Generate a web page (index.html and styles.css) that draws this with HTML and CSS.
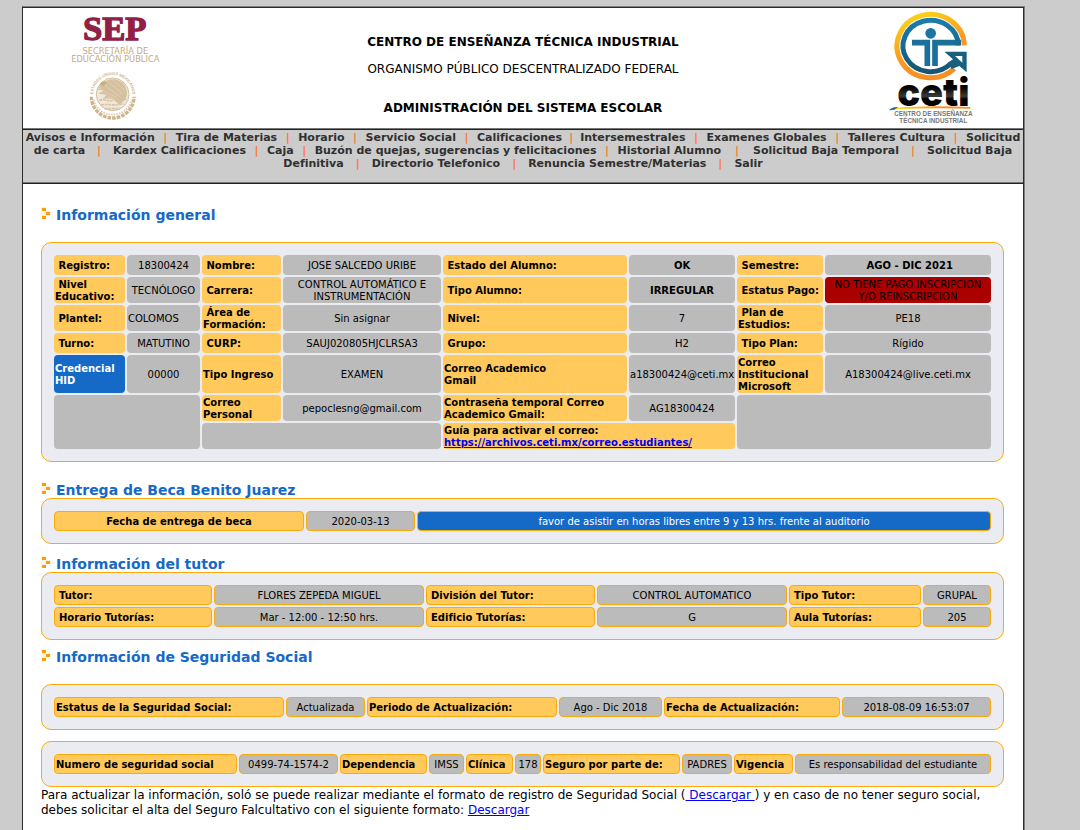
FILE: index.html
```html
<!DOCTYPE html>
<html lang="es">
<head>
<meta charset="utf-8">
<title>Administración del Sistema Escolar</title>
<link rel="stylesheet" href="styles.css">
</head>
<body>
<div class="frame">
<header class="banner">
  <svg class="sep-logo" viewBox="207 24 276 360" role="img" aria-label="SEP Secretaría de Educación Pública">
    <text class="sep-name" x="344" y="119">SEP</text>
    <text class="sep-sub" x="346" y="161">SECRETARÍA DE</text>
    <text class="sep-sub" x="346" y="187">EDUCACIÓN PÚBLICA</text>
    <path id="seal-arc" d="M279 284a59 59 0 0 1 118 0" fill="none"/>
    <text class="seal-text"><textPath href="#seal-arc" startOffset="50%">ESTADOS UNIDOS MEXICANOS</textPath></text>
    <path d="M274 290a64 64 0 0 0 128 0" fill="none" stroke="#cdb58d" stroke-width="10" stroke-dasharray="11 3"/>
    <path d="M281 300a59 59 0 0 0 114 0" fill="none" stroke="#dccbae" stroke-width="5" stroke-dasharray="5 3"/>
    <circle cx="338" cy="283" r="49" fill="#f0e8dc" stroke="#d3bf9c" stroke-width="3"/>
    <path d="M294 266c12-22 34-32 56-27 22 6 32 25 31 45-4 16-14 25-25 29l-17-16-30-2 11-11-25-3 18-10-21-2 17-8z" fill="#d5c19f"/>
    <path d="M311 253l52 40M322 244l48 39M337 240l38 31M301 269l50 24M304 280l38 17" stroke="#e4d5bb" stroke-width="2"/>
    <path d="M319 246c-9-4-18 1-19 9l10 2c5-1 8-5 9-11z" fill="#c7ae82"/>
    <path d="M298 302c14-9 25 5 39-1 14-8 28 4 42-4M303 315c18-5 30 4 68-4M313 326h47" fill="none" stroke="#d6c4a4" stroke-width="5" stroke-dasharray="9 2"/>
  </svg>
  <div class="titles">
    <p class="institution">CENTRO DE ENSEÑANZA TÉCNICA INDUSTRIAL</p>
    <p class="agency">ORGANISMO PÚBLICO DESCENTRALIZADO FEDERAL</p>
    <p class="system">ADMINISTRACIÓN DEL SISTEMA ESCOLAR</p>
  </div>
  <svg class="ceti-logo" viewBox="567 24 252 360" role="img" aria-label="CETI Centro de Enseñanza Técnica Industrial">
    <defs>
      <linearGradient id="gold" x1="0" y1="0" x2="0.4" y2="1">
        <stop offset="0" stop-color="#fadc18"/><stop offset="0.6" stop-color="#fa9c22"/><stop offset="1" stop-color="#f88e22"/>
      </linearGradient>
      <linearGradient id="blue" x1="0" y1="0" x2="0" y2="1">
        <stop offset="0" stop-color="#1b7cac"/><stop offset="1" stop-color="#155773"/>
      </linearGradient>
      <linearGradient id="gloss" x1="0" y1="0" x2="0" y2="1">
        <stop offset="0.4" stop-color="#000"/><stop offset="0.6" stop-color="#3a3a3a"/><stop offset="0.66" stop-color="#000"/>
      </linearGradient>
      <linearGradient id="stripe"><stop offset="0" stop-color="#fade20"/><stop offset="0.6" stop-color="#f88e22"/></linearGradient>
    </defs>
    <path d="M793 136A101 95 0 1 0 763 206" fill="none" stroke="url(#gold)" stroke-width="15"/>
    <path d="M636 128H682V198M783 128H705V198" fill="none" stroke="#1a7098" stroke-width="17"/>
    <path d="M775 136A83 77 0 1 0 751 192" fill="none" stroke="url(#blue)" stroke-width="15"/>
    <circle cx="692" cy="100" r="16" fill="#1a75a2"/>
    <path d="M733 155H800V217L778 198 755 207 743 188 759 178Z" fill="#17617f"/>
    <path d="M765 168H787V188Z" fill="#fff"/>
    <text class="ceti-name" x="700" y="317">ceti</text>
    <path d="M588 323Q680 315 811 321V326Q690 323 588 328Z" fill="url(#stripe)"/>
    <path d="M566 331Q577 320 594 321L584 329Z" fill="#1a7098"/>
    <text class="ceti-sub" x="700" y="347">CENTRO DE ENSEÑANZA</text>
    <text class="ceti-sub" x="700" y="368">TÉCNICA INDUSTRIAL</text>
  </svg>
</header>

<nav class="menu">
<a href="#">Avisos e Información</a><span class="bar">|</span><a href="#">Tira de Materias</a><span class="bar">|</span><a href="#">Horario</a><span class="bar">|</span><a href="#">Servicio Social</a><span class="bar">|</span><a href="#">Calificaciones</a><span class="bar tight">|</span><a href="#">Intersemestrales</a><span class="bar">|</span><a href="#">Examenes Globales</a><span class="bar">|</span><a href="#">Talleres Cultura</a><span class="bar">|</span><a href="#">Solicitud<br>de carta</a><span class="bar wide">|</span><a href="#">Kardex Calificaciones</a><span class="bar">|</span><a href="#">Caja</a><span class="bar">|</span><a href="#">Buzón de quejas, sugerencias y felicitaciones</a><span class="bar">|</span><a href="#">Historial Alumno</a><span class="bar wider">|</span><a href="#">Solicitud Baja Temporal</a><span class="bar wide">|</span><a href="#">Solicitud Baja<br>Definitiva</a><span class="bar wide">|</span><a href="#">Directorio Telefonico</a><span class="bar wide">|</span><a href="#">Renuncia Semestre/Materias</a><span class="bar wide">|</span><a href="#">Salir</a>
</nav>

<main class="content">
<svg class="defs" aria-hidden="true"><symbol id="marker" viewBox="0 0 10 12"><path d="M0 0h5v4h5v4H5v4H0z" fill="#fff3dc"/><path d="M1 1h4v3H1zM5 5h4v3H5zM1 9h4v3H1z" fill="#ff9b05"/></symbol></svg>

<section class="block general">
  <h2><svg class="marker"><use href="#marker"/></svg>Información general</h2>
  <div class="panel">
  <table class="t-general">
    <colgroup><col><col><col><col><col><col><col><col></colgroup>
    <tr><th>&nbsp;Registro:</th><td>18300424</td><th>&nbsp;Nombre:</th><td>JOSE SALCEDO URIBE</td><th>&nbsp;Estado del Alumno:</th><td class="strong">OK</td><th>&nbsp;Semestre:</th><td class="strong">&nbsp;AGO - DIC 2021</td></tr>
    <tr><th>&nbsp;Nivel<br>Educativo:</th><td>TECNÓLOGO</td><th>&nbsp;Carrera:</th><td>CONTROL AUTOMÁTICO E INSTRUMENTACIÓN</td><th>&nbsp;Tipo Alumno:</th><td class="strong">IRREGULAR</td><th>&nbsp;Estatus Pago:</th><td class="unpaid">NO TIENE PAGO INSCRIPCION Y/O REINSCRIPCION</td></tr>
    <tr><th>&nbsp;Plantel:</th><td class="start">COLOMOS</td><th>&nbsp;Área de<br>Formación:</th><td>Sin asignar</td><th>&nbsp;Nivel:</th><td>7</td><th>&nbsp;Plan de<br>Estudios:</th><td>PE18</td></tr>
    <tr><th>&nbsp;Turno:</th><td>MATUTINO</td><th>&nbsp;CURP:</th><td>SAUJ020805HJCLRSA3</td><th>&nbsp;Grupo:</th><td>H2</td><th>&nbsp;Tipo Plan:</th><td>Rígido</td></tr>
    <tr><th class="notice">Credencial HID</th><td>00000</td><th>Tipo Ingreso</th><td>EXAMEN</td><th>Correo Academico<br>Gmail</th><td>a18300424@ceti.mx</td><th>Correo Institucional Microsoft</th><td>A18300424@live.ceti.mx</td></tr>
    <tr><td colspan="2" rowspan="2"></td><th>Correo Personal</th><td>pepoclesng@gmail.com</td><th>Contraseña temporal Correo Academico Gmail:</th><td>AG18300424</td><td colspan="2" rowspan="2"></td></tr>
    <tr><td colspan="2"></td><th colspan="2">Guía para activar el correo:<br><a href="#">https://archivos.ceti.mx/correo.estudiantes/</a></th></tr>
  </table>
  </div>
</section>

<section class="block grant">
  <h2><svg class="marker"><use href="#marker"/></svg>Entrega de Beca Benito Juarez</h2>
  <div class="panel">
  <table class="t-grant outlined">
    <colgroup><col><col><col></colgroup>
    <tr><th>Fecha de entrega de beca</th><td>2020-03-13</td><td class="notice">favor de asistir en horas libres entre 9 y 13 hrs. frente al auditorio</td></tr>
  </table>
  </div>
</section>

<section class="block tutor">
  <h2><svg class="marker"><use href="#marker"/></svg>Información del tutor</h2>
  <div class="panel">
  <table class="t-tutor outlined">
    <colgroup><col><col><col><col><col><col></colgroup>
    <tr><th>Tutor:</th><td>FLORES ZEPEDA MIGUEL</td><th>División del Tutor:</th><td>CONTROL AUTOMATICO</td><th>Tipo Tutor:</th><td>GRUPAL</td></tr>
    <tr><th>Horario Tutorías:</th><td>Mar - 12:00 - 12:50 hrs.</td><th>Edificio Tutorías:</th><td>G</td><th>Aula Tutorías:</th><td>205</td></tr>
  </table>
  </div>
</section>

<section class="block social">
  <h2><svg class="marker"><use href="#marker"/></svg>Información de Seguridad Social</h2>
  <div class="panel">
  <table class="t-status outlined">
    <colgroup><col><col><col><col><col><col></colgroup>
    <tr><th>Estatus de la Seguridad Social:</th><td>Actualizada</td><th>Periodo de Actualización:</th><td>Ago - Dic 2018</td><th>Fecha de Actualización:</th><td>2018-08-09 16:53:07</td></tr>
  </table>
  </div>
  <div class="panel">
  <table class="t-number outlined">
    <colgroup><col><col><col><col><col><col><col><col><col><col></colgroup>
    <tr><th>Numero de seguridad social</th><td>0499-74-1574-2</td><th>Dependencia</th><td>IMSS</td><th>Clínica</th><td>178</td><th>Seguro por parte de:</th><td>PADRES</td><th>Vigencia</th><td>Es responsabilidad del estudiante</td></tr>
  </table>
  </div>
  <p class="help">Para actualizar la información, soló se puede realizar mediante el formato de registro de Seguridad Social (<a href="#">&nbsp;Descargar&nbsp;</a>) y en caso de no tener seguro social, debes solicitar el alta del Seguro Falcultativo con el siguiente formato: <a href="#">Descargar</a></p>
</section>
</main>
</div>
</body>
</html>
```
FILE: styles.css
```css
* { box-sizing: border-box; }
body {
  margin: 0;
  min-height: 100vh;
  display: flex;
  padding: 6px 55px 0 22px;
  background: #ccc;
  color: #000;
  font-family: Verdana, "DejaVu Sans", sans-serif;
}
.frame {
  flex: 1;
  min-width: 0;
  background: #fff;
  border: 1px solid #2c2c2c;
  border-top-color: #808080;
  border-right-color: #808080;
  border-bottom: 0;
  box-shadow: inset 0 1px #2c2c2c, inset -1px 0 #2c2c2c;
  padding: 1px 1px 0 0;
}
h2, p { margin: 0; }

.banner {
  display: grid;
  grid-template-columns: 184px 1fr 184px;
  justify-items: center;
  background: #fff;
  border-bottom: 1px solid #777;
}
.sep-logo { width: 92px; height: 120px; }
.ceti-logo { width: 84px; height: 120px; }
.titles {
  padding-top: 26px;
  text-align: center;
  font-size: 12px;
  line-height: 16px;
}
.institution, .system { font-weight: bold; }
.agency { margin: 11px 0 23px; }
.sep-logo text, .ceti-logo text { text-anchor: middle; }
.sep-name { font: bold 104px "Liberation Serif", serif; fill: #8f2146; stroke: #8f2146; stroke-width: 4px; }
.sep-sub { font: 25px "DejaVu Sans", sans-serif; fill: #c6ab7b; }
.seal-text { font: bold 12px "Liberation Sans", sans-serif; fill: #cbb48b; }
.ceti-name { font: 900 114px Inter, sans-serif; fill: url(#gloss); }
.ceti-sub { font: bold 19px "Liberation Sans", sans-serif; fill: #777; }

.menu {
  padding-top: 1px;
  height: 54px;
  border-top: 1px solid #222;
  border-bottom: 1px solid #777;
  background: #ccc;
  color: #333;
  text-align: center;
  font-size: 11px;
  font-weight: bold;
  line-height: 13px;
  white-space: nowrap;
}
.menu a { color: #303030; text-decoration: none; }
.bar { display: inline-block; width: 21px; color: #ff7733; }
.bar.tight { width: 18px; }
.bar.wide { width: 28px; }
.bar.wider { width: 32px; }

.content { padding: 0 19px 0 18px; border-top: 1px solid #222; }
.defs { display: none; }
h2 {
  display: flex;
  gap: 5px;
  color: #1569c7;
  font-size: 14px;
  line-height: 16px;
}
.marker { width: 10px; height: 12px; }
.general { padding-top: 23px; }
.general h2, .social h2 { margin-bottom: 19px; }
.grant { padding-top: 20px; }
.tutor { padding-top: 12px; }
.social { padding-top: 9px; }
.panel {
  padding: 10px;
  border: 1px solid #faab0c;
  border-radius: 10px;
  background: #ebecf2;
}
.panel + .panel { margin-top: 11px; }

table {
  width: 100%;
  table-layout: fixed;
  border-spacing: 2px;
  font-size: 10px;
  line-height: 12px;
}
th, td { height: 20px; padding: 2px 1px 0; border-radius: 4px; }
th { background: #ffc95c; text-align: left; }
td { background: #bbb; text-align: center; }
.start { text-align: left; }
.strong { font-weight: bold; }
.unpaid { background: #a00; color: #000; }
.notice { background: #1569c7; color: #fff; }
.outlined th, .outlined td { border: 1px solid #faab0c; }
.t-tutor th { padding-left: 4px; }
.t-grant th { text-align: center; }

.t-general col:nth-child(1) { width: 71px; }
.t-general col:nth-child(2) { width: 73px; }
.t-general col:nth-child(3) { width: 79px; }
.t-general col:nth-child(4) { width: 158px; }
.t-general col:nth-child(5) { width: 184px; }
.t-general col:nth-child(6) { width: 106px; }
.t-general col:nth-child(7) { width: 86px; }
.t-general col:nth-child(8) { width: 166px; }

.t-grant col:nth-child(1) { width: 250px; }
.t-grant col:nth-child(2) { width: 109px; }
.t-grant col:nth-child(3) { width: 574px; }

.t-tutor col:nth-child(1) { width: 158px; }
.t-tutor col:nth-child(2) { width: 210px; }
.t-tutor col:nth-child(3) { width: 169px; }
.t-tutor col:nth-child(4) { width: 190px; }
.t-tutor col:nth-child(5) { width: 132px; }
.t-tutor col:nth-child(6) { width: 68px; }

.t-status col:nth-child(1) { width: 230px; }
.t-status col:nth-child(2) { width: 79px; }
.t-status col:nth-child(3) { width: 190px; }
.t-status col:nth-child(4) { width: 103px; }
.t-status col:nth-child(5) { width: 176px; }
.t-status col:nth-child(6) { width: 149px; }

.t-number col:nth-child(1) { width: 183px; }
.t-number col:nth-child(2) { width: 99px; }
.t-number col:nth-child(3) { width: 87px; }
.t-number col:nth-child(4) { width: 35px; }
.t-number col:nth-child(5) { width: 47px; }
.t-number col:nth-child(6) { width: 26px; }
.t-number col:nth-child(7) { width: 137px; }
.t-number col:nth-child(8) { width: 50px; }
.t-number col:nth-child(9) { width: 59px; }
.t-number col:nth-child(10) { width: 196px; }

.help { padding-top: 1px; font-size: 12px; line-height: 15px; }
a { color: #00e; }
```
